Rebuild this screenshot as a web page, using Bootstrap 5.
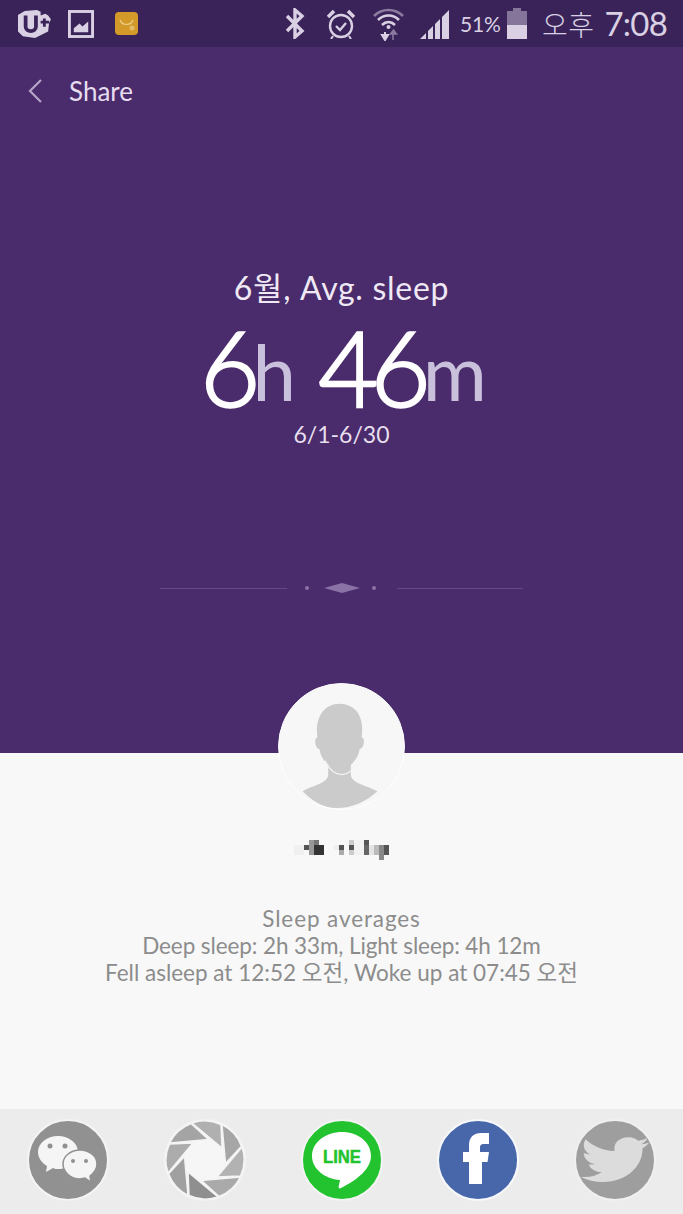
<!DOCTYPE html>
<html lang="ko">
<head>
  <meta charset="utf-8"/>
  <meta name="viewport" content="width=device-width, initial-scale=1.0"/>
  <title>Share</title>
  <link href="https://cdn.jsdelivr.net/npm/bootstrap@5.3.0/dist/css/bootstrap.min.css" rel="stylesheet">
  <style>
    html, body { height: 100%; }
    body { font-family: Lato, "Noto Sans CJK KR", sans-serif; background: #f8f8f8; width: 683px; height: 1214px; overflow: hidden; }
    .status-strip { height: 47px; background: #3a2358; color: #d9d0e4; padding: 0 16px 0 18px; }
    .gap-gallery { margin-left: 16px; }
    .gap-mail { margin-left: 21px; }
    .gap-alarm { margin-left: 22px; }
    .gap-wifi { margin-left: 18px; }
    .status-pct { font-size: 21px; line-height: 1; width: 39px; margin-left: 10px; white-space: nowrap; letter-spacing: -.2px; }
    .status-ampm { font-family: "Noto Sans CJK KR", sans-serif; font-weight: 300; font-size: 28px; line-height: 1; margin-left: 15px; white-space: nowrap; letter-spacing: .5px; }
    .status-time { font-size: 33px; font-weight: 400; line-height: 1; margin-left: 10px; white-space: nowrap; letter-spacing: -.8px; }
    .hero { height: 706px; background: #4a2b6b; color: #fff; }
    .share-bar { height: 88px; padding-left: 27px; gap: 26px; color: #e6def0; font-size: 26px; }
    .hero-title { margin-top: 133px; font-size: 32px; line-height: 40px; letter-spacing: .7px; color: #efe9f5; }
    .hero-big { font-size: 104px; line-height: 100px; margin-top: 9px; padding-left: 3px; font-weight: 300; white-space: nowrap; letter-spacing: -8px; word-spacing: 3px; -webkit-text-stroke: 2.4px #fff; }
    .hero-unit { font-size: 78px; color: #c9c0dc; font-weight: 400; vertical-align: 6px; letter-spacing: -1px; -webkit-text-stroke: 0; }
    .hero-range { font-size: 23px; line-height: 28px; margin-top: -1px; color: #e6dfee; }
    .split-line { margin-top: 134px; padding: 0 160px; gap: 17px; }
    .split-rule { height: 1px; background: #65478a; flex: 1 1 0; }
    .avatar-holder { width: 127px; height: 127px; margin-top: -70px; border-radius: 50%; background: #f7f7f7; border: 1px solid #fff; overflow: hidden; z-index: 2; }
    .name-blur { margin-top: 30px; height: 20px; line-height: 0; }
    .sleep-copy { margin-top: 45px; color: #8c8c8c; font-size: 22.500px; line-height: 27px; }
    .sleep-head { letter-spacing: .9px; }
    .sleep-mid { letter-spacing: -.1px; }
    .share-strip { height: 105px; background: #ececec; padding: 0 27px 3px; }
    .share-icon { width: 82px; height: 82px; }
  </style>
</head>

<body>
<div class="d-flex flex-column" style="height:1214px">
  <div class="status-strip d-flex align-items-center justify-content-between">
    <div class="d-flex align-items-center">
      <svg width="34" height="30" viewBox="0 0 36 32"><path d="M7 2l13-1 4 2 0 4 5-2 3 2 3 4-2 4-1 9-14 7-13-2-6-6V7z" fill="#d9d0e4"/><path d="M8 7v12c0 6 11 6 11 0V7" fill="none" stroke="#3a2358" stroke-width="4"/><path d="M24 14h9M28 10v9" stroke="#3a2358" stroke-width="3"/></svg>
      <svg class="gap-gallery" width="26" height="28" viewBox="0 0 27 29"><rect x="1.500" y="1.500" width="24" height="26" fill="none" stroke="#d9d0e4" stroke-width="3"/><path d="M6 23v-4l6-5 3 3 6-5v11z" fill="#d9d0e4"/></svg>
      <svg class="gap-mail" width="23" height="23" viewBox="0 0 23 23"><rect width="23" height="23" rx="4" fill="#d39a2a"/><path d="M5 8c2 6 11 6 13 0" fill="none" stroke="#efcf8b" stroke-width="1.200"/><circle cx="17" cy="16" r="2.500" fill="#e6bc6b"/></svg>
    </div>
    <div class="d-flex align-items-center">
      <svg width="20" height="31" viewBox="0 0 20 31"><path d="M2 8l15 15-7 6V2l7 6L2 23" fill="none" stroke="#d9d0e4" stroke-width="3.400"/></svg>
      <svg class="gap-alarm" width="28" height="30" viewBox="0 0 28 30"><circle cx="14" cy="17" r="11" fill="none" stroke="#d9d0e4" stroke-width="2.400"/><path d="M9 17l4 4 6-7" fill="none" stroke="#d9d0e4" stroke-width="2.400"/><path d="M1 8l6-6M27 8l-6-6" stroke="#d9d0e4" stroke-width="3.500"/><path d="M6 27l-2 3M22 27l2 3" stroke="#d9d0e4" stroke-width="2"/></svg>
      <svg class="gap-wifi" width="31" height="34" viewBox="0 0 31 34"><path d="M1 9c8-8 21-8 29 0" fill="none" stroke="#8c7ba0" stroke-width="2.600"/><path d="M5 13c6-6 15-6 21 0" fill="none" stroke="#d9d0e4" stroke-width="2.600"/><path d="M9 18c4-4 9-4 13 0" fill="none" stroke="#d9d0e4" stroke-width="2.600"/><circle cx="15.500" cy="20" r="2" fill="#d9d0e4"/><path d="M12 25v6M9 28l3 5 3-5z" fill="#d9d0e4" stroke="#d9d0e4" stroke-width="2"/><path d="M20 33v-7M17.500 27l3-4 3 4z" fill="#8c7ba0" stroke="#8c7ba0" stroke-width="1.500"/></svg>
      <svg class="ms-3" width="30" height="30" viewBox="0 0 30 30"><path d="M0 30l6-6v6zM8 30v-8l5-5v13zM15 30V15l5-5v20zM22 30V8l7-7v29z" fill="#d9d0e4"/></svg>
      <span class="status-pct">51%</span>
      <svg class="ms-2" width="20" height="31" viewBox="0 0 20 31"><path d="M6 0h8v3h6v28H0V3h6z" fill="#85759a"/><rect y="17" width="20" height="14" fill="#d9d0e4"/></svg>
      <span class="status-ampm">오후</span>
      <span class="status-time">7:08</span>
    </div>
  </div>

  <div class="hero d-flex flex-column">
    <div class="share-bar d-flex align-items-center">
      <svg width="16" height="26" viewBox="0 0 16 26"><path d="M14 2L3 13l11 11" fill="none" stroke="#b4a5c8" stroke-width="2.200"/></svg>
      <span>Share</span>
    </div>
    <div class="hero-title text-center">6월, Avg. sleep</div>
    <div class="hero-big text-center">6<span class="hero-unit">h</span> 46<span class="hero-unit">m</span></div>
    <div class="hero-range text-center">6/1-6/30</div>
    <div class="split-line d-flex align-items-center">
      <div class="split-rule"></div>
      <svg width="76" height="12" viewBox="0 0 76 12"><circle cx="3" cy="6" r="2" fill="#8a72a6"/><path d="M20 6l18-5 18 5-18 5z" fill="#8a72a6"/><circle cx="70" cy="6" r="2" fill="#8a72a6"/></svg>
      <div class="split-rule"></div>
    </div>
  </div>

  <div class="flex-grow-1 d-flex flex-column align-items-center text-center">
    <div class="avatar-holder position-relative">
      <svg width="125" height="125" viewBox="0 0 127 127"><path d="M24 109c10-6 26-8 26-17V82c-5-4-8-10-9-16-3 0-5-6-4-10l2-2c-1-8-1-16 4-24 8-13 28-13 37-1 5 8 5 17 4 25l2 2c1 4-1 10-4 10-1 6-4 12-9 16v10c0 9 16 11 27 17-12 11-26 17-41 17s-25-7-35-17z" fill="#cbcbcb"/><path d="M47 78c4 9 10 14 17 14s12-5 16-14" fill="none" stroke="#f4f4f4" stroke-width="1.200"/></svg>
    </div>
    <div class="name-blur">
      <svg width="95" height="20" viewBox="0 0 95 20">
        <rect x="0" y="5" width="10" height="10" fill="#f0f0f0"/><rect x="10" y="5" width="5" height="5" fill="#555"/>
        <rect x="15" y="0" width="5" height="15" fill="#999"/><rect x="20" y="0" width="5" height="5" fill="#777"/><rect x="20" y="5" width="10" height="10" fill="#333"/>
        <rect x="40" y="5" width="5" height="5" fill="#eee"/><rect x="45" y="5" width="5" height="5" fill="#555"/><rect x="45" y="10" width="5" height="5" fill="#aaa"/>
        <rect x="55" y="5" width="5" height="5" fill="#555"/><rect x="55" y="0" width="5" height="5" fill="#ccc"/><rect x="55" y="10" width="5" height="5" fill="#ccc"/>
        <rect x="60" y="0" width="10" height="15" fill="#f2f2f2"/><rect x="70" y="0" width="5" height="5" fill="#555"/><rect x="70" y="5" width="5" height="10" fill="#666"/>
        <rect x="75" y="5" width="5" height="10" fill="#e4e4e4"/><rect x="80" y="5" width="5" height="10" fill="#bbb"/><rect x="85" y="5" width="5" height="15" fill="#888"/><rect x="90" y="5" width="5" height="10" fill="#555"/>
      </svg>
    </div>
    <div class="sleep-copy">
      <div class="sleep-head">Sleep averages</div>
      <div class="sleep-mid">Deep sleep: 2h 33m, Light sleep: 4h 12m</div>
      <div>Fell asleep at 12:52 오전, Woke up at 07:45 오전</div>
    </div>
  </div>

  <div class="share-strip d-flex align-items-center justify-content-between">
    <svg class="share-icon" viewBox="0 0 82 82">
      <circle cx="41" cy="41" r="40" fill="#919191" stroke="#f4f4f4" stroke-width="2"/>
      <path d="M31 17c11 0 20 7 20 16s-9 17-20 17c-2 0-3 0-5-1l-7 4 1-6c-5-3-9-8-9-14 0-9 9-16 20-16z" fill="#f5f5f5"/>
      <path d="M53 31c9 0 17 6 17 14 0 5-3 9-7 12l1 6-6-4-5 1c-9 0-17-7-17-15s8-14 17-14z" fill="#f5f5f5" stroke="#919191" stroke-width="1.500"/>
      <circle cx="23" cy="27" r="2.500" fill="#919191"/><circle cx="38" cy="27" r="2.500" fill="#919191"/>
      <circle cx="46" cy="42" r="2" fill="#919191"/><circle cx="59" cy="42" r="2" fill="#919191"/>
    </svg>
    <svg class="share-icon" viewBox="-41 -41 82 82">
      <circle r="40" fill="#f6f6f6" stroke="#f4f4f4" stroke-width="2"/>
      <g stroke="#f4f4f4" stroke-width="1.500">
        <path d="M-13-37A39 39 0 0 1 16-35.500L17-12z" fill="#b0b0b0"/>
        <path d="M-13-37A39 39 0 0 1 16-35.500L17-12z" fill="#a6a6a6" transform="rotate(45)"/>
        <path d="M-13-37A39 39 0 0 1 16-35.500L17-12z" fill="#b2b2b2" transform="rotate(90)"/>
        <path d="M-13-37A39 39 0 0 1 16-35.500L17-12z" fill="#aaaaaa" transform="rotate(135)"/>
        <path d="M-13-37A39 39 0 0 1 16-35.500L17-12z" fill="#8f8f8f" transform="rotate(180)"/>
        <path d="M-13-37A39 39 0 0 1 16-35.500L17-12z" fill="#a0a0a0" transform="rotate(225)"/>
        <path d="M-13-37A39 39 0 0 1 16-35.500L17-12z" fill="#acacac" transform="rotate(270)"/>
        <path d="M-13-37A39 39 0 0 1 16-35.500L17-12z" fill="#a4a4a4" transform="rotate(315)"/>
      </g>
    </svg>
    <svg class="share-icon" viewBox="0 0 82 82">
      <circle cx="41" cy="41" r="40" fill="#22c32e" stroke="#f4f4f4" stroke-width="2"/>
      <path d="M41 13c16 0 29 10 29 24 0 13-14 24-30 32-2 1-3 0-2-3l1-5c-15-1-28-11-28-24 0-14 14-24 30-24z" fill="#fff"/>
      <text x="41" y="44" text-anchor="middle" font-family="Liberation Sans, sans-serif" font-weight="700" font-size="19" fill="#22c32e" stroke="#22c32e" stroke-width=".5" textLength="38" lengthAdjust="spacingAndGlyphs">LINE</text>
    </svg>
    <svg class="share-icon" viewBox="0 0 82 82">
      <circle cx="41" cy="41" r="40" fill="#4767aa" stroke="#f6f8fb" stroke-width="2"/>
      <path d="M32 65V43h-6V33h6v-7c0-8 5-12 12-12h8v11h-5c-3 0-4 1-4 4v4h9l-1.500 10H45v22z" fill="#fff"/>
    </svg>
    <svg class="share-icon" viewBox="0 0 82 82">
      <circle cx="41" cy="41" r="40" fill="#9e9e9e" stroke="#f0f0f0" stroke-width="2"/>
      <path transform="translate(7 13) scale(2.850 2.300)" d="M23.953 4.570a10 10 0 01-2.825.775 4.958 4.958 0 002.163-2.723c-.951.555-2.005.959-3.127 1.184a4.920 4.920 0 00-8.384 4.482C7.690 8.095 4.067 6.130 1.640 3.162a4.822 4.822 0 00-.666 2.475c0 1.710.870 3.213 2.188 4.096a4.904 4.904 0 01-2.228-.616v.060a4.923 4.923 0 003.946 4.827 4.996 4.996 0 01-2.212.085 4.936 4.936 0 004.604 3.417 9.867 9.867 0 01-6.102 2.105c-.390 0-.779-.023-1.170-.067a13.995 13.995 0 007.557 2.209c9.053 0 13.998-7.496 13.998-13.985 0-.210 0-.420-.015-.630A9.935 9.935 0 0024 4.590z" fill="#dcdcdc"/>
    </svg>
  </div>
</div>

<script src="https://cdn.jsdelivr.net/npm/bootstrap@5.3.0/dist/js/bootstrap.bundle.min.js"></script>
</body>
</html>
